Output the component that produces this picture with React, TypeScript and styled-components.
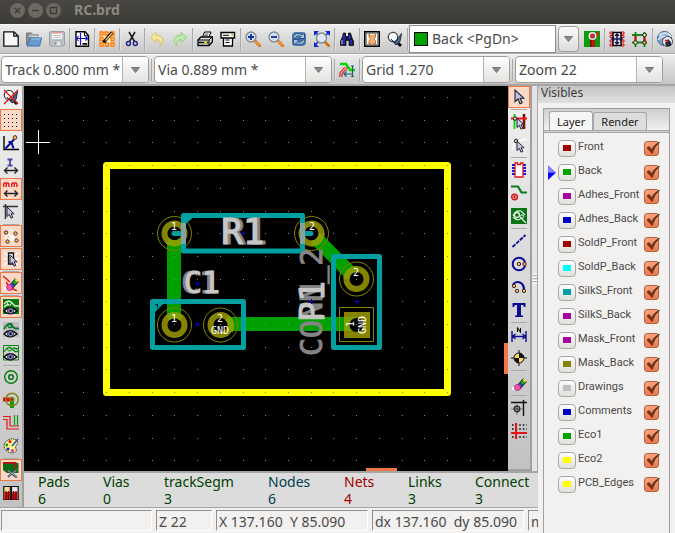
import React, { ReactNode, useState } from "react";
import styled, { createGlobalStyle } from "styled-components";

const GlobalStyle = createGlobalStyle`
  * { box-sizing: border-box; }
  html, body { margin: 0; padding: 0; }
  body {
    font-family: "Noto Sans", "Open Sans", sans-serif;
    font-size: 14px;
    color: #4a4a4a;
    background: #f2f1f0;
    overflow: hidden;
  }
  button, select { font: inherit; color: inherit; margin: 0; }
`;

/* ---------- icons, all on a 16 x 16 grid ---------- */

const lens = (
  <>
    <path d="M10 10l5 5" stroke="#d9761c" strokeWidth="3" strokeLinecap="round" />
    <path d="M10 10l4.500 4.500" stroke="#f7b25c" strokeWidth="1" />
    <circle cx="6" cy="6" r="5" fill="#cfe0f5" stroke="#888" strokeWidth="1.300" />
  </>
);

const eye = (
  <>
    <path d="M1 12q6-6.500 13 0q-7 5.500-13 0z" fill="#fff" stroke="#000" strokeWidth="1.400" />
    <circle cx="7.500" cy="11.700" r="3" fill="#8f8fe0" stroke="#223" strokeWidth="1" />
    <circle cx="7.500" cy="11.700" r="1.200" fill="#000" />
  </>
);

const cursor = (x: number, y: number) => (
  <path
    d={`M${x} ${y}v9.500l2.300-2.100 1.700 3.800 1.800-.9-1.700-3.500h3z`}
    fill="#c9cbe4"
    stroke="#222233"
    strokeWidth="1"
  />
);

const eraser = (
  <>
    <path d="M1 12h3v-2h2v5H1z" fill="#fff" />
    <path d="M7 13L14 5" stroke="#222" strokeWidth="5" />
    <path d="M10.800 8.700L14 5" stroke="#20b020" strokeWidth="3.500" />
    <path d="M13 6.200l1.200-1.400" stroke="#ffe040" strokeWidth="3.500" />
    <path d="M8.700 11l1.800-2" stroke="#3040d0" strokeWidth="3.500" />
    <circle cx="6.500" cy="12.500" r="3" fill="#ff50b0" stroke="#902870" strokeWidth=".8" />
  </>
);

const doubleArrow = (
  <path d="M1.500 12.500h13M4.500 9.500l-3 3 3 3M11.500 9.500l3 3-3 3" stroke="#222" strokeWidth="1.400" />
);

const magnifierCheck = (
  <>
    <path d="M9 10l5 5" stroke="#111" strokeWidth="3" />
    <circle cx="6" cy="6" r="4.700" fill="#fff" stroke="#444" strokeWidth="1.300" />
    <path d="M4 8l4 4 6.500-9.500-1.500 8L9 14z" fill="#4b6f94" stroke="#1c3048" strokeWidth="1" />
  </>
);

const ICONS: Record<string, ReactNode> = {
  newBoard: (
    <path d="M.8.8h10.200l4.200 4.200v10.200H.8zM10.800.8v4.400h4.400" fill="#f7f7f7" stroke="#111" strokeWidth="1.300" />
  ),
  openBoard: (
    <>
      <path d="M.5 14V2h5l1 1.500h6V6H5L1 14" fill="#8d8d8d" stroke="#777" />
      <path d="M3 4h10M3 5.500h10" stroke="#ccc" />
      <path d="M4.500 7h11.200l-2.200 8H1.200z" fill="#6a9cd2" stroke="#3f74ad" />
      <path d="M5.200 8h9.500" stroke="#9cc2ea" />
    </>
  ),
  saveBoard: (
    <>
      <rect x=".5" y=".5" width="15" height="14.500" rx="1.500" fill="#b9c3cd" stroke="#969ea6" />
      <path d="M3 1h10v7H3z" fill="#f6f6f6" />
      <path d="M3 1h10v1.500H3z" fill="#e59a93" />
      <path d="M4 4.500h8M4 6.300h8" stroke="#c8c8c8" />
      <path d="M4 10h8v5H4z" fill="#e4e4e4" stroke="#999" strokeWidth=".7" />
      <path d="M5.500 11h2v3h-2z" fill="#8792a0" />
    </>
  ),
  pageSettings: (
    <>
      <path d="M2 .8h9l3.500 3.700v10.700H2z" fill="#fff" stroke="#000" strokeWidth="1.400" />
      <path d="M10.500 1v3.800h3.800" stroke="#000" />
      <path d="M6.500 2v12M2 7.500h12M4.500 5l-2 2.500 2 2.500M11.500 5.500l2 2-2 2" stroke="#1010d8" strokeWidth="1.200" />
      <path d="M8.500 12h4.500v1.800H8.500z" fill="#000" />
    </>
  ),
  moduleEditor: (
    <>
      <path d="M3 3h9v10H3z" fill="#fff6d8" stroke="#e8d8a8" />
      <path
        d="M1 1h3v3H1zM6 1h3v3H6zM12 1h3v3h-3zM1 6.500h3v3H1zM12 6.500h3v3h-3zM1 12h3v3H1zM6.500 12h3v3h-3zM12 12h3v3h-3z"
        fill="#ffd9b0"
        stroke="#ff7b00"
        strokeWidth="1.300"
      />
      <path d="M4.500 11.500L13 1.500" stroke="#111" strokeWidth="3.400" />
      <path d="M6.500 9.500L13 2" stroke="#f0b848" strokeWidth="1.500" />
    </>
  ),
  cut: (
    <>
      <path d="M5 1l5.500 9.500M11 1L5.500 10.500" stroke="#1a1a1a" strokeWidth="1.500" />
      <circle cx="4.500" cy="12.500" r="2" stroke="#20208c" strokeWidth="1.400" />
      <circle cx="11.300" cy="12.500" r="2" stroke="#20208c" strokeWidth="1.400" />
    </>
  ),
  undo: (
    <path d="M7 1.500L1.500 6.500 7 11.500V8.500c3 0 5 2 4 6.500 5.500-5.500 2-11-4-10.500z" fill="#f6e99a" stroke="#d6c265" />
  ),
  redo: (
    <path d="M9 1.500l5.500 5L9 11.500V8.500c-3 0-5 2-4 6.500C-.5 9.500 3 4 9 4.500z" fill="#c2ebb2" stroke="#90cc82" />
  ),
  print: (
    <>
      <path d="M5.500 6L7.500 1h6.500l-2 5" fill="#fff" stroke="#000" />
      <path d="M7.500 3h4M7 4.700h4" stroke="#333" strokeWidth=".8" />
      <path d="M1 9l3-3h11.300v5l-3.300 3.500H1z" fill="#e0e0e0" stroke="#000" strokeWidth="1.300" />
      <path d="M1 9h11v5M12 9l3-3" stroke="#000" />
      <path d="M1.500 11.500h10" stroke="#000" strokeWidth="1.600" />
      <path d="M7 10.500h3v2H7z" fill="#e8e000" />
    </>
  ),
  plot: (
    <>
      <path d="M3.500 6.500h9V15h-9z" fill="#fff" stroke="#000" strokeWidth="1.300" />
      <path d="M1 1.500h13.500V7H1z" fill="#fff" stroke="#000" strokeWidth="1.400" />
      <path d="M3 4.300h6M5.500 9h4M5.500 11.500h4" stroke="#000" />
      <path d="M11.500 3h1.500v2h-1.500z" fill="#d8b000" />
    </>
  ),
  zoomIn: <>{lens}<path d="M6 3v6M3 6h6" stroke="#182c9c" strokeWidth="1.800" /></>,
  zoomOut: <>{lens}<path d="M3 6h6" stroke="#182c9c" strokeWidth="1.800" /></>,
  redraw: (
    <>
      <rect x="1" y="1" width="14" height="14" rx="4" fill="#4f7ab0" />
      <path d="M2 7c0-4 6-6 9-3l2.500-2v5.500H8L10 5.500C8 4 5 5 4.500 7zM14 9c0 4-6 6-9 3l-2.500 2V8.500H8L6 10.500c2 1.500 5 .5 5.500-1.500z" fill="#a9c4e2" stroke="#204a80" strokeWidth=".9" />
    </>
  ),
  zoomFit: (
    <>
      <path d="M0 0h5L0 5zM16 0h-5l5 5zM0 16h5l-5-5z" fill="#1028d0" />
      <path d="M11 11l4 4" stroke="#d9761c" strokeWidth="3" strokeLinecap="round" />
      <path d="M12 4l3-3M4 11l-3 3M1 1l3 3" stroke="#1028d0" strokeWidth="1.600" />
      <circle cx="7.500" cy="7" r="5" fill="#dbe8f8" stroke="#888" strokeWidth="1.400" />
    </>
  ),
  find: (
    <>
      <path d="M4.500 2h2v3.500H9.500V2h2l1.500 5 1.500 3v4.500h-4.500V9.500H7v5H1.500V10L3 7z" fill="#14143c" stroke="#111" strokeWidth=".8" />
      <path d="M5 4v9M10.500 4v4M12 9v4.500" stroke="#2838e8" strokeWidth="1.300" />
      <path d="M3 9v4.500" stroke="#c8ccff" />
    </>
  ),
  netlist: (
    <>
      <rect x=".8" y=".8" width="14.400" height="14.400" fill="#fff" stroke="#000" strokeWidth="1.600" />
      <path d="M2.500 2.500h11v11h-11z" stroke="#222" strokeDasharray="1 1" />
      <path d="M5 3l2 2h2.500l2-2v3L10 8l1.500 2v3H9.500L8 11.500 6.500 13H5v-3l1.500-2L5 6z" fill="#f6b57a" stroke="#c05a10" strokeWidth=".8" />
    </>
  ),
  drc: magnifierCheck,
  autoLayer: (
    <>
      <path d="M0 0h16v16H0z" fill="#0a9a0a" />
      <path d="M6 6h5v10H6z" fill="#8a1010" />
      <path d="M8 5h3v11H8z" fill="#c01818" />
      <path d="M10 7l4-5" stroke="#e01818" strokeWidth="3" />
      <circle cx="8.500" cy="5" r="3.300" fill="#b03838" stroke="#e8e8e8" strokeWidth="1.500" />
    </>
  ),
  moduleMode: (
    <>
      <path d="M1 1h3v2H1zM1 4.500h3v2H1zM1 9h3v2H1zM1 13h3v2H1zM12 1h3v2h-3zM12 4.500h3v2h-3zM12 9h3v2h-3zM12 13h3v2h-3z" fill="#fbb" stroke="#d01818" />
      <path d="M4 1.500h8v13H4z" fill="#ececec" stroke="#000" strokeWidth="1.400" />
      <path d="M8 3v10M3 8h10M6 5l2-2 2 2M6 11l2 2 2-2M5 6L3 8l2 2M11 6l2 2-2 2" stroke="#16164a" strokeWidth="1.500" />
    </>
  ),
  trackMode: (
    <>
      <path d="M0 4h15M0 11.500h15" stroke="#0a8a1a" strokeWidth="2" />
      <path d="M3.500 1v15M12.500 1v15" stroke="#0a8a1a" strokeWidth="1.800" />
      <path d="M3.500 4v7.500M12.500 4v7.500" stroke="#c41414" strokeWidth="2" />
      <circle cx="12.500" cy="4" r="1.800" fill="#ffe8a0" stroke="#222" />
      <circle cx="3.500" cy="11.500" r="1.800" fill="#ffe8a0" stroke="#222" />
      <circle cx="12.500" cy="11.500" r="1.800" fill="#f4a040" stroke="#222" />
    </>
  ),
  webRouter: (
    <>
      <circle cx="7.500" cy="7.500" r="7" fill="#7da3cc" stroke="#345a85" />
      <path d="M2 5c3-4 9-4 12 1M1 9c4-5 9-4 12-2" stroke="#dde9f5" strokeWidth="1.600" />
      <circle cx="10.500" cy="10.500" r="5" fill="#edf1f6" stroke="#444" />
      <path d="M8 12l3-4 3 3v4h-5z" fill="#222a48" />
      <path d="M8 9l3 2" stroke="#d02018" strokeWidth="1.600" />
    </>
  ),
  autoWidth: (
    <>
      <path d="M1 2h6l4 6h5" stroke="#08d808" strokeWidth="2.600" />
      <path d="M1 15v-4l4-5h4" stroke="#e02020" strokeWidth="1.200" />
      <path d="M3 15v-3l3-4h2" stroke="#e02020" strokeWidth="1.200" />
      <path d="M5 12h8M7.500 9.500L5 12l2.500 2.500M13.500 4v11M12 4h3M12 14.500h3" stroke="#1a5c80" strokeWidth="1.200" />
    </>
  ),
  drcOff: <>{magnifierCheck}<path d="M1 1l14 14M15 1L1 15" stroke="#e01818" strokeWidth="1.400" /></>,
  grid: (
    <path
      d="M1 2.500h13M1 6.500h13M1 10.500h13M1 14.500h13"
      stroke="#111"
      strokeDasharray="1 3"
      strokeWidth="1"
      shapeRendering="crispEdges"
    />
  ),
  polar: (
    <>
      <path d="M1 1v13.500h15" stroke="#000" strokeWidth="1.400" />
      <path d="M2.500 13.500L11 4.500M5.500 7h4M8.500 7.500l2 6" stroke="#0a0a9c" strokeWidth="2" />
      <circle cx="12" cy="2.500" r="1.900" fill="#f7b374" stroke="#523015" />
    </>
  ),
  inches: (
    <>
      <path d="M4.500 1.500h5M4.500 7.500h5M7 1.500v6" stroke="#4848a4" strokeWidth="1.800" />
      {doubleArrow}
    </>
  ),
  millimetres: (
    <>
      <path d="M.7 6V3q1.300-2.500 2.600 0v3-3q1.300-2.500 2.600 0v3M8.700 6V3q1.300-2.500 2.600 0v3-3q1.300-2.500 2.600 0v3" stroke="#e01c1c" strokeWidth="1.400" />
      {doubleArrow}
    </>
  ),
  cursorShape: (
    <>
      <path d="M0 2.500h15M2.500 0v15" stroke="#333" strokeWidth="1.500" />
      {cursor(4, 3)}
    </>
  ),
  ratsnest: (
    <>
      <path d="M3 4.500L13 12M13 5L4 13M3 5v8M4 12h9" stroke="#fff" strokeWidth="1.300" />
      <path d="M1 2l2 1M6 2h4M7 8h2" stroke="#fff" />
      <circle cx="3" cy="4.500" r="1.700" fill="#f6b57a" stroke="#442a1a" />
      <circle cx="12.500" cy="5.500" r="1.700" fill="#f6b57a" stroke="#442a1a" />
      <circle cx="4.500" cy="13.500" r="1.700" fill="#f6b57a" stroke="#442a1a" />
      <circle cx="13.500" cy="12.500" r="1.700" fill="#f6b57a" stroke="#442a1a" />
    </>
  ),
  moduleRatsnest: (
    <>
      <path d="M1 2l4 3M15 2l-4 3M0 8h4M1 14l4-3M15 14l-4-3M12 8h4" stroke="#fff" strokeWidth="1.300" />
      <path d="M5.500 2h5v11h-5z" fill="#e6e6ee" stroke="#111" strokeWidth="1.300" />
      {cursor(7, 4)}
    </>
  ),
  autoDelete: (
    <>
      <path d="M0 1l7 6M3 7l2 3M8 13l6 3" stroke="#e01c1c" strokeWidth="1.500" />
      {eraser}
    </>
  ),
  zonesFilled: (
    <>
      <path d="M0 0h16v15H0z" fill="#0a7a12" />
      <path d="M1 5q4-5 8-1l3 3h4M1 8q3-3 5-2" stroke="#dfeccc" strokeWidth="1.300" />
      <circle cx="6.500" cy="4" r="2" stroke="#dfeccc" />
      {eye}
    </>
  ),
  zonesHidden: (
    <>
      <path d="M0 0h16v15H0z" fill="#bdbdbd" />
      <path d="M1 7q4-8 8-3l3 2.500h4" stroke="#0a7a32" strokeWidth="1.800" />
      <circle cx="7" cy="3.500" r="2.200" stroke="#0a7a32" strokeWidth="1.300" />
      {eye}
    </>
  ),
  zonesOutline: (
    <>
      <path d="M.5.5h15v14.500H.5z" stroke="#0a8a12" />
      <path d="M1 7q4-7 8-3l3 2.500h4M10 3l5 1" stroke="#0a8a12" strokeWidth="1.300" />
      <circle cx="6.500" cy="4" r="2" stroke="#0a8a12" />
      {eye}
    </>
  ),
  padSketch: (
    <>
      <circle cx="8" cy="8" r="6.300" stroke="#0a7a12" strokeWidth="1.400" />
      <circle cx="8" cy="8" r="2.300" stroke="#0a7a12" strokeWidth="1.600" />
    </>
  ),
  viaSketch: (
    <>
      <path d="M0 5.500h8v4H0z" fill="#dc1010" />
      <path d="M7 9h4v7H7z" fill="#0a9a12" />
      <circle cx="9" cy="7.500" r="6.200" stroke="#848414" strokeWidth="1.500" />
      <circle cx="9" cy="7.500" r="2" fill="#90301a" stroke="#848414" strokeWidth="1.300" />
    </>
  ),
  trackSketch: (
    <>
      <path d="M0 1.500h7V11h9M0 4.500h4V14h12" stroke="#e41414" strokeWidth="1.200" />
      <path d="M11.500 0v10.500M14.500 0v10.500" stroke="#0a9a12" strokeWidth="1.200" />
    </>
  ),
  contrast: (
    <>
      <path d="M1 7C3 0 13-1 14.500 4c.5 3-2 3-2 5s2 3 0 5c-3 2-11 1-11.500-7z" fill="#fff08c" stroke="#333" strokeDasharray="1.500 .8" />
      <circle cx="7" cy="3.500" r="1.500" fill="#e81818" />
      <circle cx="3.800" cy="7" r="1.400" fill="#109c10" />
      <circle cx="5" cy="11" r="1.500" fill="#1420b8" />
      <circle cx="9.500" cy="12.500" r="1.500" fill="#e020d0" />
      <path d="M9 8l6-7" stroke="#2060b0" strokeWidth="1.600" />
    </>
  ),
  microwave: (
    <>
      <path d="M0 1h15.500v10H4L0 8z" fill="#0a6c12" />
      <path d="M0 1h12.500v5" stroke="#b01414" strokeWidth="2" />
      <path d="M4 8l10 7.500M14 7L5 15" stroke="#45505c" strokeWidth="2.200" />
      <path d="M5 8.500l9 6.500M13.500 8L5.500 14.500" stroke="#a8c0d8" strokeWidth=".8" />
    </>
  ),
  layersManager: (
    <>
      <path d="M.8 1.500h6.500v13H.8z" fill="#f6dc96" stroke="#111" strokeWidth="1.200" />
      <path d="M8.500 1.500h6.700v13H8.500z" fill="#e6e6ee" stroke="#111" strokeWidth="1.200" />
      <path d="M1.500 7h5.500v7.500H1.500zM9 7h5.500v7.500H9z" fill="#d01414" />
      <path d="M3 6v8M5.500 6v8M10.500 6v8M13 6v8" stroke="#6c0808" strokeWidth="1.200" />
    </>
  ),
  arrow: (
    <path d="M4 1v11.500l3-2.500 2 4.800 2.200-1L9.200 9.200h3.600z" fill="#c4c8e0" stroke="#1e2030" strokeWidth="1.100" />
  ),
  highlightNet: (
    <>
      <path d="M3.500 0v15" stroke="#10d810" strokeWidth="2" />
      <path d="M13 0v15" stroke="#7c1010" strokeWidth="2.600" />
      <path d="M0 4.500h16" stroke="#f01414" strokeWidth="2" />
      <circle cx="4" cy="4.500" r="1.800" fill="#e8c890" stroke="#222" />
      {cursor(6, 4)}
    </>
  ),
  localRatsnest: (
    <>
      <path d="M0 3l5 2 11-3M4 5L1 13M5 5l10 10" stroke="#fff" strokeWidth="1.300" />
      <circle cx="5" cy="4" r="1.800" fill="#e8c890" stroke="#222" />
      {cursor(6, 4)}
    </>
  ),
  addModule: (
    <>
      <path d="M1 3h3M1 6h3M1 9h3M1 12h3M12 3h3M12 6h3M12 9h3M12 12h3" stroke="#1414e0" strokeWidth="1.800" />
      <path d="M4 1h2.500v1.500h3V1H12v14H4z" fill="#fff" stroke="#e81414" strokeWidth="1.300" />
    </>
  ),
  addTrack: (
    <>
      <path d="M0 1.500h7l3.500 6H16" stroke="#0a8020" strokeWidth="2.200" />
      <circle cx="3.500" cy="12" r="2.800" fill="#f8c0c0" stroke="#c81818" strokeWidth="1.400" />
      <path d="M3.500 10.500v3M2 12h3" stroke="#c81818" />
    </>
  ),
  addZone: (
    <>
      <path d="M0 0h16v16H0z" fill="#0a7414" />
      <path d="M2 8q2-6 8-5l4 4M2 9q5 5 8 1l5 5" stroke="#e4efe0" strokeWidth="1.200" />
      <circle cx="6" cy="7" r="2.500" stroke="#e4efe0" strokeWidth="1.300" />
      <circle cx="11" cy="8.500" r="1.700" stroke="#e4efe0" />
    </>
  ),
  addLine: <path d="M1.500 14L14.500 2" stroke="#0c0c94" strokeWidth="1.800" strokeDasharray="4 1" />,
  addCircle: (
    <>
      <circle cx="8" cy="8" r="6.300" stroke="#0c0c94" strokeWidth="2" />
      <circle cx="8" cy="8" r="1.700" fill="#f6b57a" stroke="#442a1a" />
      <circle cx="13.500" cy="8" r="1.700" fill="#f6b57a" stroke="#442a1a" />
    </>
  ),
  addArc: (
    <>
      <path d="M2 6c2-5 11-4 11 5" stroke="#0c0c94" strokeWidth="2.200" />
      <circle cx="3" cy="7" r="1.700" fill="#f6b57a" stroke="#442a1a" />
      <circle cx="6" cy="12" r="1.700" fill="#f6b57a" stroke="#442a1a" />
      <circle cx="13" cy="12" r="1.700" fill="#f6b57a" stroke="#442a1a" />
    </>
  ),
  addText: (
    <path d="M1.500 1h13v4h-1.500l-1-2H10v10.500h2V15H4v-1.500h2V3H4L3 5H1.500z" fill="#0c0c94" />
  ),
  addDimension: (
    <>
      <path d="M1 4v11M15 4v11M1.500 9.500h13M4.500 7l-3 2.500 3 2.500M11.500 7l3 2.500-3 2.500" stroke="#0c0c94" strokeWidth="1.400" />
      <path d="M6.500 5V1l3 4V1" stroke="#111" strokeWidth="1.100" />
    </>
  ),
  addTarget: (
    <>
      <path d="M8 0v16M0 8h16" stroke="#111" />
      <circle cx="8" cy="8" r="5" fill="#111" stroke="#111" />
      <path d="M8 8V3.500A4.500 4.500 0 0 0 3.500 8zM8 8v4.500A4.500 4.500 0 0 0 12.500 8z" fill="#f6dc62" />
    </>
  ),
  deleteItem: eraser,
  drillOffset: (
    <>
      <path d="M0 2.500h16M12.500 0v16" stroke="#111" strokeWidth="1.400" />
      <path d="M0 9h12M6 4v11" stroke="#777" />
      <circle cx="6" cy="9" r="2.800" fill="#ddd" stroke="#222" strokeWidth="1.300" />
      <path d="M6 7v4M4 9h4" stroke="#222" />
    </>
  ),
  gridOrigin: (
    <>
      <path d="M1 2h15M1 6h15M1 14h15" stroke="#111" strokeWidth="1.600" strokeDasharray="1.600 2" />
      <path d="M5 0v16M0 10h16" stroke="#e41414" strokeWidth="2" />
    </>
  ),
};

const IconSvg = styled.svg`
  display: block;
  width: 16px;
  height: 16px;
  flex: none;
`;

const Icon = ({ name }: { name: string }) => (
  <IconSvg viewBox="0 0 16 16" fill="none" aria-hidden="true">
    {ICONS[name]}
  </IconSvg>
);

/* ---------- window chrome ---------- */

const Window = styled.div`
  display: flex;
  flex-direction: column;
  height: 100vh;
  overflow: hidden;
`;

const TitleBar = styled.header`
  display: flex;
  align-items: center;
  flex: none;
  height: 24px;
  padding: 0 10px 4px;
  background: linear-gradient(#484742, #3c3b37);
  color: #8d8a80;
`;

const WindowButton = styled.button`
  display: grid;
  place-items: center;
  width: 15px;
  height: 15px;
  margin-right: 3px;
  padding: 0;
  border: 0;
  border-radius: 50%;
  background: #6b6962;
`;

const Title = styled.h1`
  margin: 0 0 0 10px;
  font-size: 14px;
  line-height: 20px;
  font-weight: 700;
`;

const ToolBar = styled.div<{ $last?: boolean }>`
  display: flex;
  align-items: center;
  flex: none;
  height: ${(p) => (p.$last ? "32px" : "30px")};
  background: linear-gradient(#ececec, #c6c6c6);
  border-top: 1px solid #f8f8f8;
  border-bottom: ${(p) => (p.$last ? "2px solid #a5a5a5" : "1px solid #ababab")};
`;

const ToolButton = styled.button`
  flex: none;
  width: 23px;
  height: 26px;
  padding: 0 4px 0 3px;
  border: 0;
  background: none;
`;

const Divider = styled.span`
  flex: none;
  width: 2px;
  height: 22px;
  border-left: 1px solid #a9a9a9;
  border-right: 1px solid #e2e2e2;
`;

const ComboBox = styled.span<{ $width: number }>`
  display: grid;
  flex: none;
  width: ${(p) => p.$width}px;
  height: 27px;
  margin: 0 2px 0 1px;
  border: 1px solid #a19c96;
  border-radius: 4px;
  background: #fff;
  overflow: hidden;
`;

const Select = styled.select`
  grid-area: 1 / 1;
  width: 100%;
  padding: 0 25px 0 3px;
  border: 0;
  background: none;
  appearance: none;
  font-size: 14px;
  line-height: 20px;
`;

const LayerSelect = styled(Select)`
  padding: 0 4px;
`;

const ComboArrow = styled.span`
  grid-area: 1 / 1;
  justify-self: end;
  display: grid;
  place-items: center;
  width: 26px;
  border-left: 1px solid #b5b2ad;
  background: linear-gradient(#fdfdfd, #e4e3e1);
  pointer-events: none;
`;

const LayerCombo = styled.span`
  display: flex;
  align-items: center;
  flex: none;
  width: 147px;
  height: 28px;
  padding-left: 4px;
  border: 1px solid #8d8d8d;
  background: #fff;
`;

const LayerSwatch = styled.span`
  flex: none;
  width: 14px;
  height: 14px;
  border: 1px solid #000;
  background: #00a000;
`;

const ArrowButton = styled.button`
  display: grid;
  place-items: center;
  flex: none;
  width: 21px;
  height: 26px;
  margin: 0 2px;
  padding: 0;
  border: 1px solid #a19c96;
  border-radius: 4px;
  background: linear-gradient(#fafafa, #dcdcdc);
`;

const DownArrow = () => (
  <svg width="9" height="6" viewBox="0 0 9 6" aria-hidden="true">
    <path d="M.5.500h8L4.500 5.500z" fill="#8a8a8a" stroke="#777" />
  </svg>
);

const Combo = ({ label, value, width }: { label: string; value: string; width: number }) => (
  <ComboBox $width={width}>
    <Select aria-label={label}>
      <option>{value}</option>
    </Select>
    <ComboArrow>
      <DownArrow />
    </ComboArrow>
  </ComboBox>
);

/* ---------- work area ---------- */

const Body = styled.div`
  display: grid;
  grid-template-columns: minmax(0, 1fr) 137px;
  flex: 1;
  min-height: 0;
`;

const Editor = styled.main`
  display: flex;
  flex-direction: column;
  min-width: 0;
  min-height: 0;
`;

const Workspace = styled.div`
  display: flex;
  flex: 1;
  min-height: 0;
`;

const Centre = styled.div`
  display: flex;
  flex-direction: column;
  flex: 1;
  min-width: 0;
`;

const CanvasRow = styled.div`
  display: flex;
  flex: 1;
  min-height: 0;
`;

const SideBar = styled.div<{ $side: "left" | "right" }>`
  display: flex;
  flex-direction: column;
  flex: none;
  width: 24px;
  overflow: hidden;
  background: linear-gradient(#f0f0f0, #c2c2c2);
  border-right: 2px solid #a0a0a0;
  border-bottom: ${(p) => (p.$side === "left" ? "1px" : "2px")} solid #a0a0a0;
`;

const SideButton = styled.button<{ $active?: boolean }>`
  display: grid;
  place-items: center;
  flex: none;
  width: 22px;
  height: 22px;
  padding: 0;
  border: 1px solid ${(p) => (p.$active ? "#f07746" : "transparent")};
  background: ${(p) => (p.$active ? "#fbd9c8" : "none")};

  & + & {
    margin-top: 1px;
  }
`;

const SideDivider = styled.span<{ $height: number }>`
  flex: none;
  height: ${(p) => p.$height}px;
  margin: 0 3px;
  background: linear-gradient(#a9a9a9, #a9a9a9) center / 100% 1px no-repeat;
`;

const Canvas = styled.div`
  position: relative;
  flex: 1;
  min-width: 0;
  background: #000;
  overflow: hidden;
`;

const BoardSvg = styled.svg`
  display: block;
`;

const VerticalThumb = styled.span`
  position: absolute;
  right: 0;
  top: 257px;
  width: 4px;
  height: 31px;
  background: #f07746;
`;

const HorizontalThumb = styled.span`
  position: absolute;
  left: 342px;
  bottom: 0;
  width: 31px;
  height: 3px;
  background: #f07746;
`;

const Sash = styled.div`
  display: grid;
  place-items: center;
  flex: none;
  width: 6px;
  border-right: 1px solid #a8a8a8;
  background: #e4e4e4;
`;

const SashGrip = styled.span`
  width: 4px;
  height: 10px;
  background: repeating-linear-gradient(#fff 0 1px, #a8a8a8 1px 2px, #e4e4e4 2px 3px);
`;

const MessagePanel = styled.dl`
  display: grid;
  grid-template-columns: 65px 61px 104px 76px 64px 67px 1fr;
  flex: none;
  height: 37px;
  margin: 0;
  padding-left: 14px;
  overflow: hidden;
  background: #dcdcdc;
  border-top: 2px solid #a5a5a5;
  border-bottom: 1px solid #a5a5a5;
`;

const Message = styled.div<{ $color: string }>`
  color: ${(p) => p.$color};
  font-size: 14px;
  line-height: 17px;
  white-space: nowrap;

  dt, dd { margin: 0; }
`;

const StatusBar = styled.footer`
  display: flex;
  flex: none;
  gap: 4px;
  height: 25px;
  padding: 2px 0 2px 1px;
  overflow: hidden;
  background: #f2f1f0;
`;

const StatusField = styled.span<{ $width: number }>`
  flex: none;
  width: ${(p) => p.$width}px;
  padding-left: 2px;
  border: 1px solid;
  border-color: #8f8f8f #fff #fff #8f8f8f;
  font-size: 14px;
  line-height: 21px;
  white-space: pre;
`;

/* ---------- layers panel ---------- */

const Panel = styled.aside`
  display: flex;
  flex-direction: column;
  min-height: 0;
  background: #f2f1f0;
`;

const PanelTitle = styled.h2`
  flex: none;
  margin: 0 0 5px;
  padding-left: 3px;
  height: 17px;
  background: linear-gradient(#c4c4c4, #e0e0e0);
  color: #3a3a3a;
  font-size: 12px;
  line-height: 14px;
  font-weight: 400;
`;

const Notebook = styled.div`
  display: flex;
  flex-direction: column;
  flex: 1;
  min-height: 0;
  margin: 0 5px;
  border: 1px solid #9f9f9f;
  border-bottom: 0;
`;

const Tabs = styled.div`
  display: flex;
  align-items: flex-end;
  flex: none;
  height: 24px;
  padding-left: 5px;
  background: linear-gradient(#cfcfcf, #f0f0f0);
  border-bottom: 3px double #a5a5a5;
`;

const Tab = styled.button<{ $active?: boolean }>`
  height: ${(p) => (p.$active ? "19px" : "18px")};
  padding: 0 7px;
  border: 1px solid #a5a5a5;
  border-bottom: 0;
  border-radius: 3px 3px 0 0;
  background: ${(p) => (p.$active ? "#f6f6f5" : "#dddddc")};
  color: #222;
  font-size: 11px;
  line-height: 15px;
`;

const LayerList = styled.ul`
  margin: 0;
  padding: 3px 7px 0 4px;
  list-style: none;
`;

const LayerRow = styled.li`
  display: grid;
  grid-template-columns: 8px 18px minmax(0, 1fr) 18px;
  column-gap: 2px;
  align-items: center;
  height: 24px;
`;

const LayerButton = styled.button`
  display: grid;
  place-items: center;
  width: 18px;
  height: 17px;
  padding: 0;
  border: 1px solid #aaa6a2;
  border-radius: 4px;
  background: linear-gradient(#fdfdfd, #e0dfde);
`;

const Swatch = styled.span<{ $color: string }>`
  width: 8px;
  height: 6px;
  background: ${(p) => p.$color};
`;

const LayerLabel = styled.label`
  padding-bottom: 2px;
  font-family: Roboto, "Noto Sans", sans-serif;
  font-size: 11px;
  line-height: 16px;
  white-space: nowrap;
`;

const CheckCell = styled.span`
  display: grid;
  align-items: center;
`;

const Checkbox = styled.input`
  grid-area: 1 / 1;
  appearance: none;
  width: 15px;
  height: 15px;
  margin: 0;
  border: 1px solid #b5603f;
  border-radius: 3px;
  background: linear-gradient(#f9a27c, #f07a4c);
`;

const CheckMark = styled.svg`
  grid-area: 1 / 1;
  pointer-events: none;
`;

/* ---------- board drawing ---------- */

const Silk = styled.text<{ $size: number; $tone: string }>`
  font-family: "DejaVu Sans Mono", monospace;
  font-size: ${(p) => p.$size}px;
  fill: ${(p) => p.$tone};
  stroke: ${(p) => p.$tone};
  stroke-width: 1px;
`;

const PadText = styled.text`
  font-family: "DejaVu Sans Mono", monospace;
  font-size: 10px;
  fill: #fff;
  text-anchor: middle;
`;

const gridDots = Array.from({ length: 21 }, (_, c) =>
  Array.from({ length: 17 }, (_, r) => [Math.round(38 + 22.73 * c), Math.round(97 + 22.7 * r)])
).flat();

const Pad = ({ x, y }: { x: number; y: number }) => (
  <>
    <circle cx={x} cy={y} r="10" stroke="#848400" strokeWidth="6" />
    <circle cx={x} cy={y} r="17" stroke="#848400" />
  </>
);

const Anchor = ({ x, y }: { x: number; y: number }) => (
  <path d={`M${x - 2} ${y}h5M${x + 0.5} ${y - 2.5}v5`} stroke="#0000c8" />
);

const Board = () => (
  <BoardSvg width="484" height="386" viewBox="24 86 484 386" fill="none" role="img" aria-label="Board">
    <path d="M106.500 165.500h341v227h-341z" stroke="#ffff00" strokeWidth="7" strokeLinejoin="round" />
    <g stroke="#00a000" strokeWidth="14">
      <path d="M174 233v91" />
      <path d="M220 324h136" />
      <path d="M311 233l45 46" />
    </g>
    <g fill="#000">
      <circle cx="174.500" cy="233.500" r="8" />
      <circle cx="311.500" cy="233.500" r="8" />
      <circle cx="174.500" cy="325" r="8" />
      <circle cx="220.500" cy="325" r="8" />
      <circle cx="356.500" cy="279" r="8" />
    </g>
    <Pad x={174.5} y={233.5} />
    <Pad x={311.5} y={233.5} />
    <Pad x={174.5} y={325} />
    <Pad x={220.5} y={325} />
    <Pad x={356.5} y={279} />
    <path d="M344 312h26v26h-26z" fill="#848400" />
    <path d="M344 317h12v14h-12z" fill="#84a000" />
    <circle cx="356.500" cy="325" r="7" fill="#000" />
    <path d="M339.500 307.500h34v34h-34z" stroke="#848400" />
    <g stroke="#84a000" strokeWidth="6">
      <path d="M167.500 240.500a10 10 0 0 0 14 0M167.500 318a10 10 0 0 1 14 0" />
      <path d="M321.500 233.500a10 10 0 0 1-10 10M346.500 279a10 10 0 0 1 10-10M227 318a10 10 0 0 1 3 13" />
    </g>

    <g stroke="#00a0a0" strokeWidth="5" strokeLinejoin="round">
      <path d="M183.500 215.500h119v35.500h-119z" />
      <path d="M174 233.500h9M303 233.500h8" strokeLinecap="round" />
      <path d="M152.500 301.500h91v46h-91z" />
      <path d="M333.500 256.500h46v91h-46z" />
    </g>
    <path d="M183 217h11l-11 9zM153 302h12l-12 12z" fill="#00a0a0" />
    <path d="M155.500 304.500h2v3" stroke="#000" />
    <path d="M183.500 223v21M302.500 223v21" stroke="#84a4a0" strokeWidth="5" />

    <Silk $size={36} $tone="#848484" x="224" y="244">R1</Silk>
    <Silk $size={36} $tone="#c6c6c6" x="221" y="244">R1</Silk>
    <Silk $size={30} $tone="#848484" x="181" y="293">C1</Silk>
    <Silk $size={30} $tone="#c6c6c6" x="184" y="293">C1</Silk>
    <Silk $size={30} $tone="#848484" transform="translate(322 356) rotate(-90)">CONN_2</Silk>
    <Silk $size={34} $tone="#c6c6c6" transform="translate(324 322) rotate(-90)">P1</Silk>

    <g fill="#848484" shapeRendering="crispEdges">
      {gridDots.map(([x, y]) => (
        <rect key={`${x}-${y}`} x={x} y={y} width="1" height="1" />
      ))}
    </g>

    <Anchor x={243} y={233.5} />
    <Anchor x={197} y={324.5} />
    <Anchor x={197} y={283.5} />
    <Anchor x={356} y={301.5} />
    <Anchor x={311} y={301.5} />

    <PadText x="174" y="230">1</PadText>
    <PadText x="312" y="230">2</PadText>
    <PadText x="174" y="322">1</PadText>
    <PadText x="220" y="322">2</PadText>
    <PadText x="220" y="334">GND</PadText>
    <PadText x="356" y="276">2</PadText>
    <PadText transform="translate(354 324) rotate(-90)">1</PadText>
    <PadText transform="translate(366 325) rotate(-90)">GND</PadText>

    <path d="M26 142.500h24M38.500 130v24" stroke="#fff" />
  </BoardSvg>
);

/* ---------- data ---------- */

const TOP_GROUPS = [
  ["newBoard", "openBoard", "saveBoard"],
  ["pageSettings"],
  ["moduleEditor"],
  ["cut"],
  ["undo", "redo"],
  ["print", "plot"],
  ["zoomIn", "zoomOut", "redraw", "zoomFit"],
  ["find"],
  ["netlist", "drc"],
];

const LEFT_GROUPS = [
  ["drcOff", "grid", "polar", "inches", "millimetres", "cursorShape"],
  ["ratsnest", "moduleRatsnest"],
  ["autoDelete"],
  ["zonesFilled", "zonesHidden", "zonesOutline"],
  ["padSketch", "viaSketch", "trackSketch", "contrast"],
  ["microwave", "layersManager"],
];

const RIGHT_GROUPS = [
  ["arrow"],
  ["highlightNet", "localRatsnest"],
  ["addModule", "addTrack", "addZone"],
  ["addLine", "addCircle", "addArc", "addText"],
  ["addDimension", "addTarget"],
  ["deleteItem"],
  ["drillOffset", "gridOrigin"],
];

const ACTIVE = new Set([
  "grid", "millimetres", "ratsnest", "moduleRatsnest", "autoDelete", "zonesFilled", "microwave", "arrow",
]);

const MESSAGES = [
  ["Pads", "6", "#004000"],
  ["Vias", "0", "#004000"],
  ["trackSegm", "3", "#004000"],
  ["Nodes", "6", "#004050"],
  ["Nets", "4", "#a80000"],
  ["Links", "3", "#004000"],
  ["Connect", "3", "#004000"],
];

const LAYERS = [
  ["Front", "#a00000"],
  ["Back", "#00a000"],
  ["Adhes_Front", "#a000a0"],
  ["Adhes_Back", "#0000c0"],
  ["SoldP_Front", "#a00000"],
  ["SoldP_Back", "#00ffff"],
  ["SilkS_Front", "#00a0a0"],
  ["SilkS_Back", "#a000a0"],
  ["Mask_Front", "#a000a0"],
  ["Mask_Back", "#848400"],
  ["Drawings", "#c0c0c0"],
  ["Comments", "#0000c0"],
  ["Eco1", "#00a000"],
  ["Eco2", "#ffff00"],
  ["PCB_Edges", "#ffff00"],
];

const SideGroups = ({ groups, gap }: { groups: string[][]; gap: number }) => (
  <>
    {groups.map((group, i) => (
      <React.Fragment key={group[0]}>
        {i > 0 && <SideDivider $height={gap} />}
        {group.map((name) => (
          <SideButton key={name} aria-label={name} $active={ACTIVE.has(name)}>
            <Icon name={name} />
          </SideButton>
        ))}
      </React.Fragment>
    ))}
  </>
);

const LayerItem = ({ name, color }: { name: string; color: string }) => {
  const [visible, setVisible] = useState(true);
  return (
    <LayerRow>
      {name === "Back" ? (
        <svg width="8" height="15" viewBox="0 0 8 15" aria-hidden="true">
          <path d="M0 0l8 7.500H0z" fill="#8080ff" />
          <path d="M0 15l8-7.500H0z" fill="#0000ff" />
        </svg>
      ) : (
        <span />
      )}
      <LayerButton aria-label={`${name} colour`}>
        <Swatch $color={color} />
      </LayerButton>
      <LayerLabel htmlFor={`layer-${name}`}>{name}</LayerLabel>
      <CheckCell>
        <Checkbox
          type="checkbox"
          id={`layer-${name}`}
          checked={visible}
          onChange={(e) => setVisible(e.target.checked)}
        />
        {visible && (
          <CheckMark width="17" height="17" viewBox="0 0 17 17" fill="none" aria-hidden="true">
            <path d="M3 8l2-1.500 2.500 3Q10 5 15.500 2 10.500 6.500 8 13.500z" fill="#6b3520" stroke="#6b3520" />
          </CheckMark>
        )}
      </CheckCell>
    </LayerRow>
  );
};

export default function App() {
  return (
    <>
      <GlobalStyle />
      <Window>
        <TitleBar>
          {["M5 5l5 5M10 5l-5 5", "M4 7.500h7", "M4.500 4.500h6v6h-6z"].map((d, i) => (
            <WindowButton key={d} aria-label={["Close", "Minimize", "Maximize"][i]}>
              <svg width="15" height="15" viewBox="0 0 15 15" fill="none" stroke="#3c3b37" strokeWidth="1.300">
                <path d={d} />
              </svg>
            </WindowButton>
          ))}
          <Title>RC.brd</Title>
        </TitleBar>

        <ToolBar role="toolbar">
          {TOP_GROUPS.map((group) => (
            <React.Fragment key={group[0]}>
              {group.map((name) => (
                <ToolButton key={name} aria-label={name}>
                  <Icon name={name} />
                </ToolButton>
              ))}
              <Divider />
            </React.Fragment>
          ))}
          <LayerCombo>
            <LayerSwatch />
            <LayerSelect aria-label="Active layer">
              <option>Back &lt;PgDn&gt;</option>
            </LayerSelect>
          </LayerCombo>
          <ArrowButton aria-label="Show layers">
            <DownArrow />
          </ArrowButton>
          <ToolButton aria-label="autoLayer">
            <Icon name="autoLayer" />
          </ToolButton>
          <Divider />
          <ToolButton aria-label="moduleMode">
            <Icon name="moduleMode" />
          </ToolButton>
          <ToolButton aria-label="trackMode">
            <Icon name="trackMode" />
          </ToolButton>
          <Divider />
          <ToolButton aria-label="webRouter">
            <Icon name="webRouter" />
          </ToolButton>
        </ToolBar>

        <ToolBar role="toolbar" $last>
          <Combo label="Track width" value="Track 0.800 mm *" width={148} />
          <Divider />
          <Combo label="Via size" value="Via 0.889 mm *" width={178} />
          <Divider />
          <ToolButton aria-label="autoWidth">
            <Icon name="autoWidth" />
          </ToolButton>
          <Divider />
          <Combo label="Grid" value="Grid 1.270" width={148} />
          <Divider />
          <Combo label="Zoom" value="Zoom 22" width={148} />
        </ToolBar>

        <Body>
          <Editor>
            <Workspace>
              <SideBar $side="left" role="toolbar">
                <SideGroups groups={LEFT_GROUPS} gap={2} />
              </SideBar>
              <Centre>
                <CanvasRow>
                  <Canvas>
                    <Board />
                    <VerticalThumb />
                    <HorizontalThumb />
                  </Canvas>
                  <SideBar $side="right" role="toolbar">
                    <SideGroups groups={RIGHT_GROUPS} gap={3} />
                  </SideBar>
                  <Sash>
                    <SashGrip />
                  </Sash>
                </CanvasRow>
                <MessagePanel>
                  {MESSAGES.map(([label, value, color]) => (
                    <Message key={label} $color={color}>
                      <dt>{label}</dt>
                      <dd>{value}</dd>
                    </Message>
                  ))}
                </MessagePanel>
              </Centre>
            </Workspace>
            <StatusBar>
              <StatusField $width={151} />
              <StatusField $width={56}>Z 22</StatusField>
              <StatusField $width={152}>{"X 137.160  Y 85.090"}</StatusField>
              <StatusField $width={152}>{"dx 137.160  dy 85.090"}</StatusField>
              <StatusField $width={60}>mm</StatusField>
            </StatusBar>
          </Editor>

          <Panel>
            <PanelTitle>Visibles</PanelTitle>
            <Notebook>
              <Tabs role="tablist">
                <Tab role="tab" aria-selected="true" $active>Layer</Tab>
                <Tab role="tab" aria-selected="false">Render</Tab>
              </Tabs>
              <LayerList>
                {LAYERS.map(([name, color]) => (
                  <LayerItem key={name} name={name} color={color} />
                ))}
              </LayerList>
            </Notebook>
          </Panel>
        </Body>
      </Window>
    </>
  );
}
